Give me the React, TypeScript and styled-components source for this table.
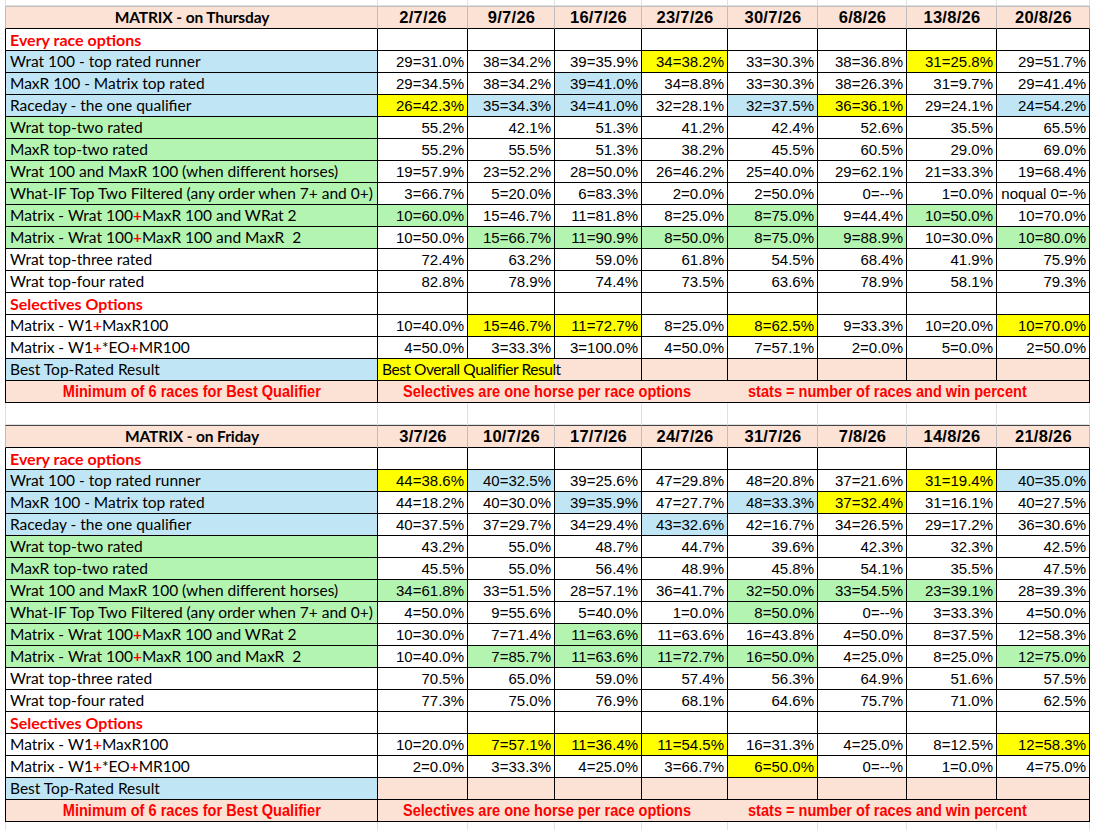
import styled, { createGlobalStyle } from 'styled-components'

const PEACH = '#fbe2d5'
const BLUE = '#c0e6f5'
const GREEN = '#b3f5b0'
const YELLOW = '#ffff00'
const RED = '#ff0000'
const GRID = '#e1e1e1'

const GlobalStyle = createGlobalStyle`
  html, body {
    margin: 0;
    background: #ffffff;
  }
`

const Page = styled.div`
  width: 1097px;
  height: 830px;
  overflow: hidden;
  padding-left: 5px;
  box-sizing: border-box;
  background: #ffffff;
`

const Sheet = styled.table`
  border-collapse: separate;
  border-spacing: 0;
  table-layout: fixed;
  width: 1085px;
`

const Row = styled.tr<{ $h?: number }>`
  height: ${(p) => p.$h ?? 22}px;
`

type Kind = 'label' | 'data' | 'date' | 'title' | 'section' | 'note' | 'grid'

const Cell = styled.td<{ $bg?: string; $kind?: Kind; $first?: boolean; $top?: string; $side?: string }>`
  padding: 0 3px 0 4px;
  height: 21px;
  box-sizing: content-box;
  background: ${(p) => p.$bg ?? '#ffffff'};
  border-right: 1px solid ${(p) => p.$side ?? '#000'};
  border-bottom: 1px solid #000;
  border-left: ${(p) => (p.$first ? `1px solid ${p.$side ?? '#000'}` : 'none')};
  border-top: ${(p) => (p.$top ? `1px solid ${p.$top}` : 'none')};
  white-space: pre;
  overflow: visible;
  line-height: 21px;
  color: #000;
  font-family: 'Liberation Sans', Arial, sans-serif;
  font-size: 15px;
  text-align: right;
  vertical-align: middle;

  ${(p) =>
    p.$kind === 'label' &&
    `
    font-family: Lato, 'Noto Sans', sans-serif;
    font-size: 15.5px;
    text-align: left;
  `}
  ${(p) =>
    p.$kind === 'section' &&
    `
    font-family: Lato, 'Noto Sans', sans-serif;
    font-size: 16px;
    font-weight: 700;
    color: ${RED};
    text-align: left;
  `}
  ${(p) =>
    p.$kind === 'title' &&
    `
    font-family: Lato, 'Noto Sans', sans-serif;
    font-size: 15.5px;
    font-weight: 700;
    text-align: center;
    letter-spacing: -0.1px;
  `}
  ${(p) =>
    p.$kind === 'date' &&
    `
    font-size: 16.5px;
    font-weight: 700;
    text-align: center;
    letter-spacing: 0.3px;
  `}
  ${(p) =>
    p.$kind === 'note' &&
    `
    font-family: 'Liberation Sans', Arial, sans-serif;
    font-size: 16px;
    font-weight: 700;
    color: ${RED};
    text-align: center;
  `}
  ${(p) =>
    p.$kind === 'grid' &&
    `
    height: auto;
    line-height: 0;
    font-size: 0;
    border-bottom-color: ${GRID};
  `}
`

const Plus = styled.b`
  color: ${RED};
  font-weight: 700;
`

/* the sheet uses a narrow bold face: squeeze the bold sans to its width */
const Narrow = styled.span<{ $w?: number; $origin?: string }>`
  display: inline-block;
  width: ${(p) => (p.$w ? `${p.$w}px` : 'auto')};
  transform: scaleX(0.91);
  transform-origin: ${(p) => p.$origin ?? 'left'} center;
  text-align: left;
`

const NoteLine = styled.div`
  display: flex;
  padding-left: 21px;
`

const Qualifier = styled.span`
  font-family: Lato, 'Noto Sans', sans-serif;
  font-size: 15.5px;
  letter-spacing: -0.45px;
`

const COLS = [373, 90, 87, 87, 86, 90, 89, 90, 93]

type V = string | [string, 'Y' | 'B' | 'G']
type Line = { label: React.ReactNode; bg?: string; section?: boolean; values?: V[] }

const plus = (a: string, b: string, c?: string) => (
  <>
    {a}
    <Plus>+</Plus>
    {b}
    {c !== undefined && (
      <>
        <Plus>+</Plus>
        {c}
      </>
    )}
  </>
)

const fill = { Y: YELLOW, B: BLUE, G: GREEN }

const thursday: Line[] = [
  { label: 'Every race options', section: true },
  { label: 'Wrat 100 - top rated runner', bg: BLUE, values: ['29=31.0%', '38=34.2%', '39=35.9%', ['34=38.2%', 'Y'], '33=30.3%', '38=36.8%', ['31=25.8%', 'Y'], '29=51.7%'] },
  { label: 'MaxR 100 - Matrix top rated', bg: BLUE, values: ['29=34.5%', '38=34.2%', ['39=41.0%', 'B'], '34=8.8%', '33=30.3%', '38=26.3%', '31=9.7%', '29=41.4%'] },
  { label: 'Raceday - the one qualifier', bg: BLUE, values: [['26=42.3%', 'Y'], ['35=34.3%', 'B'], ['34=41.0%', 'B'], '32=28.1%', ['32=37.5%', 'B'], ['36=36.1%', 'Y'], '29=24.1%', ['24=54.2%', 'B']] },
  { label: 'Wrat top-two rated', bg: GREEN, values: ['55.2%', '42.1%', '51.3%', '41.2%', '42.4%', '52.6%', '35.5%', '65.5%'] },
  { label: 'MaxR top-two rated', bg: GREEN, values: ['55.2%', '55.5%', '51.3%', '38.2%', '45.5%', '60.5%', '29.0%', '69.0%'] },
  { label: 'Wrat 100 and MaxR 100 (when different horses)', bg: GREEN, values: ['19=57.9%', '23=52.2%', '28=50.0%', '26=46.2%', '25=40.0%', '29=62.1%', '21=33.3%', '19=68.4%'] },
  { label: 'What-IF Top Two Filtered (any order when 7+ and 0+)', bg: GREEN, values: ['3=66.7%', '5=20.0%', '6=83.3%', '2=0.0%', '2=50.0%', '0=--%', '1=0.0%', 'noqual 0=-%'] },
  { label: plus('Matrix - Wrat 100', 'MaxR 100 and WRat 2'), bg: GREEN, values: [['10=60.0%', 'G'], '15=46.7%', '11=81.8%', '8=25.0%', ['8=75.0%', 'G'], '9=44.4%', ['10=50.0%', 'G'], '10=70.0%'] },
  { label: plus('Matrix - Wrat 100', 'MaxR 100 and MaxR  2'), bg: GREEN, values: ['10=50.0%', ['15=66.7%', 'G'], ['11=90.9%', 'G'], ['8=50.0%', 'G'], ['8=75.0%', 'G'], ['9=88.9%', 'G'], '10=30.0%', ['10=80.0%', 'G']] },
  { label: 'Wrat top-three rated', values: ['72.4%', '63.2%', '59.0%', '61.8%', '54.5%', '68.4%', '41.9%', '75.9%'] },
  { label: 'Wrat top-four rated', values: ['82.8%', '78.9%', '74.4%', '73.5%', '63.6%', '78.9%', '58.1%', '79.3%'] },
  { label: 'Selectives Options', section: true },
  { label: plus('Matrix - W1', 'MaxR100'), values: ['10=40.0%', ['15=46.7%', 'Y'], ['11=72.7%', 'Y'], '8=25.0%', ['8=62.5%', 'Y'], '9=33.3%', '10=20.0%', ['10=70.0%', 'Y']] },
  { label: plus('Matrix - W1', '*EO', 'MR100'), values: ['4=50.0%', '3=33.3%', '3=100.0%', '4=50.0%', '7=57.1%', '2=0.0%', '5=0.0%', '2=50.0%'] },
]

const friday: Line[] = [
  { label: 'Every race options', section: true },
  { label: 'Wrat 100 - top rated runner', bg: BLUE, values: [['44=38.6%', 'Y'], ['40=32.5%', 'B'], '39=25.6%', '47=29.8%', '48=20.8%', '37=21.6%', ['31=19.4%', 'Y'], ['40=35.0%', 'B']] },
  { label: 'MaxR 100 - Matrix top rated', bg: BLUE, values: ['44=18.2%', '40=30.0%', ['39=35.9%', 'B'], '47=27.7%', ['48=33.3%', 'B'], ['37=32.4%', 'Y'], '31=16.1%', '40=27.5%'] },
  { label: 'Raceday - the one qualifier', bg: BLUE, values: ['40=37.5%', '37=29.7%', '34=29.4%', ['43=32.6%', 'B'], '42=16.7%', '34=26.5%', '29=17.2%', '36=30.6%'] },
  { label: 'Wrat top-two rated', bg: GREEN, values: ['43.2%', '55.0%', '48.7%', '44.7%', '39.6%', '42.3%', '32.3%', '42.5%'] },
  { label: 'MaxR top-two rated', bg: GREEN, values: ['45.5%', '55.0%', '56.4%', '48.9%', '45.8%', '54.1%', '35.5%', '47.5%'] },
  { label: 'Wrat 100 and MaxR 100 (when different horses)', bg: GREEN, values: [['34=61.8%', 'G'], '33=51.5%', '28=57.1%', '36=41.7%', ['32=50.0%', 'G'], ['33=54.5%', 'G'], ['23=39.1%', 'G'], '28=39.3%'] },
  { label: 'What-IF Top Two Filtered (any order when 7+ and 0+)', bg: GREEN, values: ['4=50.0%', '9=55.6%', '5=40.0%', '1=0.0%', ['8=50.0%', 'G'], '0=--%', '3=33.3%', '4=50.0%'] },
  { label: plus('Matrix - Wrat 100', 'MaxR 100 and WRat 2'), bg: GREEN, values: ['10=30.0%', '7=71.4%', ['11=63.6%', 'G'], '11=63.6%', '16=43.8%', '4=50.0%', '8=37.5%', '12=58.3%'] },
  { label: plus('Matrix - Wrat 100', 'MaxR 100 and MaxR  2'), bg: GREEN, values: ['10=40.0%', ['7=85.7%', 'G'], ['11=63.6%', 'G'], ['11=72.7%', 'G'], ['16=50.0%', 'G'], '4=25.0%', '8=25.0%', ['12=75.0%', 'G']] },
  { label: 'Wrat top-three rated', values: ['70.5%', '65.0%', '59.0%', '57.4%', '56.3%', '64.9%', '51.6%', '57.5%'] },
  { label: 'Wrat top-four rated', values: ['77.3%', '75.0%', '76.9%', '68.1%', '64.6%', '75.7%', '71.0%', '62.5%'] },
  { label: 'Selectives Options', section: true },
  { label: plus('Matrix - W1', 'MaxR100'), values: ['10=20.0%', ['7=57.1%', 'Y'], ['11=36.4%', 'Y'], ['11=54.5%', 'Y'], '16=31.3%', '4=25.0%', '8=12.5%', ['12=58.3%', 'Y']] },
  { label: plus('Matrix - W1', '*EO', 'MR100'), values: ['2=0.0%', '3=33.3%', '4=25.0%', '3=66.7%', ['6=50.0%', 'Y'], '0=--%', '1=0.0%', '4=75.0%'] },
]

const GridRow = ({ h }: { h: number }) => (
  <Row $h={h}>
    {COLS.map((_, i) => (
      <Cell key={i} $kind="grid" $first={i === 0} $side={GRID} style={{ height: h - 1 }} />
    ))}
  </Row>
)

const Block = ({ title, dates, lines, overall, topLine }: { title: string; dates: string[]; lines: Line[]; overall?: boolean; topLine: string }) => (
  <>
    <Row>
      <Cell $kind="title" $bg={PEACH} $first $top={topLine} $side="#bdbdbd">
        {title}
      </Cell>
      {dates.map((d) => (
        <Cell key={d} $kind="date" $bg={PEACH} $top={topLine} $side="#bdbdbd">
          {d}
        </Cell>
      ))}
    </Row>
    {lines.map((l, r) => (
      <Row key={r}>
        <Cell $kind={l.section ? 'section' : 'label'} $bg={l.bg} $first>
          {l.label}
        </Cell>
        {(l.values ?? Array(8).fill('')).map((v, i) =>
          typeof v === 'string' ? (
            <Cell key={i}>{v}</Cell>
          ) : (
            <Cell key={i} $bg={fill[v[1]]}>
              {v[0]}
            </Cell>
          ),
        )}
      </Row>
    ))}
    <Row>
      <Cell $kind="label" $bg={BLUE} $first>
        Best Top-Rated Result
      </Cell>
      {overall ? (
        <>
          <Cell colSpan={3} $kind="label" $bg={`linear-gradient(to right, ${YELLOW} 176px, ${PEACH} 176px)`}>
            <Qualifier>Best Overall Qualifier Result</Qualifier>
          </Cell>
          {Array.from({ length: 5 }, (_, i) => (
            <Cell key={i} $bg={PEACH} />
          ))}
        </>
      ) : (
        Array.from({ length: 8 }, (_, i) => <Cell key={i} $bg={PEACH} />)
      )}
    </Row>
    <Row>
      <Cell $kind="note" $bg={PEACH} $first>
        <Narrow $origin="center">Minimum of 6 races for Best Qualifier</Narrow>
      </Cell>
      <Cell colSpan={8} $kind="note" $bg={PEACH}>
        <NoteLine>
          <Narrow $w={345}>Selectives are one horse per race options</Narrow>
          <Narrow>stats = number of races and win percent</Narrow>
        </NoteLine>
      </Cell>
    </Row>
  </>
)

const App = () => (
  <Page>
    <GlobalStyle />
    <Sheet>
      <colgroup>
        {COLS.map((w, i) => (
          <col key={i} style={{ width: w }} />
        ))}
      </colgroup>
      <tbody>
        <GridRow h={6} />
        <Block
          title="MATRIX - on Thursday"
          dates={['2/7/26', '9/7/26', '16/7/26', '23/7/26', '30/7/26', '6/8/26', '13/8/26', '20/8/26']}
          lines={thursday}
          overall
          topLine="#bdbdbd"
        />
        <GridRow h={22} />
        <Block
          title="MATRIX - on Friday"
          dates={['3/7/26', '10/7/26', '17/7/26', '24/7/26', '31/7/26', '7/8/26', '14/8/26', '21/8/26']}
          lines={friday}
          topLine="#444"
        />
        <GridRow h={10} />
      </tbody>
    </Sheet>
  </Page>
)

export default App
